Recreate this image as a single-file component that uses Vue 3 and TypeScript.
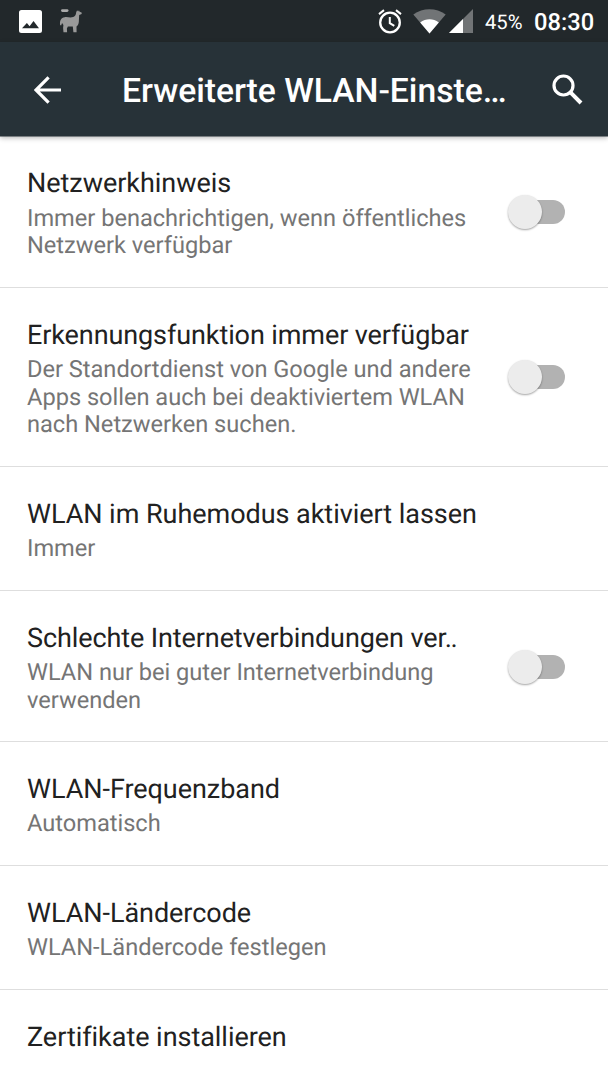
<script setup lang="ts">
interface Setting {
  title: string
  summary: string[]
  toggle?: boolean
  compact?: boolean
}

const settings: Setting[] = [
  { title: 'Netzwerkhinweis', summary: ['Immer benachrichtigen, wenn öffentliches', 'Netzwerk verfügbar'], toggle: true },
  {
    title: 'Erkennungsfunktion immer verfügbar',
    summary: ['Der Standortdienst von Google und andere', 'Apps sollen auch bei deaktiviertem WLAN', 'nach Netzwerken suchen.'],
    toggle: true,
    compact: true,
  },
  { title: 'WLAN im Ruhemodus aktiviert lassen', summary: ['Immer'] },
  { title: 'Schlechte Internetverbindungen ver‥', summary: ['WLAN nur bei guter Internetverbindung', 'verwenden'], toggle: true, compact: true },
  { title: 'WLAN-Frequenzband', summary: ['Automatisch'] },
  { title: 'WLAN-Ländercode', summary: ['WLAN-Ländercode festlegen'] },
  { title: 'Zertifikate installieren', summary: [] },
]
</script>

<template>
  <div class="screen">
    <div class="status">
      <svg class="photo" width="23" height="23" viewBox="0 0 23 23">
        <path fill="#fff" fill-rule="evenodd" d="M2.5 0h18A2.5 2.5 0 0 1 23 2.500v18a2.500 2.500 0 0 1-2.500 2.500h-18A2.500 2.500 0 0 1 0 20.500v-18A2.500 2.500 0 0 1 2.500 0zM3 18.200h17l-5.500-7.100-3.900 5.200-2.700-3.300z" />
      </svg>
      <svg class="llama" width="24" height="26" viewBox="0 0 24 26">
        <rect x="2" y="1.200" width="7.500" height="2.800" rx="1.400" fill="#aaa" />
        <path fill="#999" d="M17.200 4.200l.9-2 1 1.300.9-1.200.6 1.500 2 .8.1 1.500-2.500 1-.4 6.800c-.2 2.200-1.100 3.500-2.300 4.500l.1 5.800h-3.200l-.6-5.600H8.900l-1 2 .2 3.600H4.500l-.4-4.300.3-3-1.300-2-1 2.600-1-.4c-.5-4.600.8-7.400 4.600-7.900 3.200-.4 5.500.9 8.500-.2 2.200-.8 2.700-2.400 3-4.800z" />
      </svg>
      <div class="spacer"></div>
      <svg class="alarm" width="24" height="25" viewBox="0 0 24 25">
        <circle cx="12" cy="13.500" r="9.800" fill="none" stroke="#fff" stroke-width="2.300" />
        <path d="M11.800 8v6.200l4.500 2.700M1 5.100l5-4M23 5.100l-5-4" fill="none" stroke="#fff" stroke-width="2" />
      </svg>
      <svg class="wifi" width="33" height="25" viewBox="0 0 33 25">
        <path fill="#717476" d="M.3 5.500C9.800-1.400 23.200-1.400 32.700 5.500L16.500 24.500z" />
        <path fill="#fff" d="M7.200 13.400c5.600-4.300 13-4.300 18.600 0l-9.300 11.100z" />
      </svg>
      <svg class="cell" width="24" height="24" viewBox="0 0 24 24">
        <path fill="#717476" d="M0 24L24 0v24z" />
        <path fill="#fff" d="M0 24l14-14v14z" />
      </svg>
      <span class="battery">45%</span>
      <span class="clock">08:30</span>
    </div>

    <header class="bar">
      <svg class="back" width="28" height="28" viewBox="0 0 28 28">
        <path d="M27 14H3M14.600 1.400L2 14l12.600 12.600" fill="none" stroke="#fff" stroke-width="3.200" />
      </svg>
      <h1>Erweiterte WLAN-Einste…</h1>
      <svg class="search" width="31" height="31" viewBox="0 0 31 31">
        <circle cx="11.500" cy="11.500" r="9.500" fill="none" stroke="#fff" stroke-width="3.200" />
        <path d="M18.200 18.200l10.800 10.800" stroke="#fff" stroke-width="4" />
      </svg>
    </header>

    <main>
      <section v-for="item in settings" :key="item.title" class="row">
        <div class="copy">
          <h2 :class="{ compact: item.compact }">{{ item.title }}</h2>
          <p v-for="line in item.summary" :key="line">{{ line }}</p>
        </div>
        <div v-if="item.toggle" class="switch"><span class="thumb"></span></div>
      </section>
    </main>
  </div>
</template>

<style>
body {
  margin: 0;
  overflow: hidden;
}
</style>

<style scoped>
.screen {
  width: 608px;
  height: 1080px;
  overflow: hidden;
  display: flex;
  flex-direction: column;
  background: #fff;
  font-family: Roboto, "Noto Sans", sans-serif;
  text-rendering: geometricPrecision;
}
.status {
  height: 42px;
  flex: none;
  display: flex;
  align-items: center;
  background: #22282b;
  color: #fff;
  box-sizing: border-box;
  padding: 0 14px 0 19px;
}
svg {
  display: block;
  flex: none;
}
.llama {
  margin-left: 17px;
}
.spacer {
  flex: 1;
}
.wifi {
  margin-left: 11px;
}
.cell {
  margin-left: 3px;
}
.battery {
  width: 37px;
  margin-left: 12px;
  font-size: 20.200px;
  line-height: 42px;
  padding-top: 2px;
  white-space: nowrap;
}
.clock {
  width: 60px;
  margin-left: 12px;
  font-size: 23.700px;
  font-weight: 500;
  line-height: 42px;
  padding-top: 2px;
  white-space: nowrap;
}
.bar {
  height: 94px;
  flex: none;
  display: flex;
  align-items: center;
  box-sizing: border-box;
  padding: 1px 25px 0 34px;
  background: #273238;
  color: #fff;
  position: relative;
  box-shadow: 0 1px 0 rgba(39, 50, 56, 0.5), 0 2px 5px rgba(0, 0, 0, 0.28);
}
h1 {
  flex: 1;
  margin: 5px 0 0 60px;
  font-size: 33.700px;
  font-weight: 500;
  line-height: 40px;
  letter-spacing: -0.03px;
  white-space: nowrap;
}
.search {
  margin-bottom: 1px;
}
main {
  flex: none;
  padding-top: 0.4px;
}
.row {
  display: flex;
  align-items: center;
  justify-content: space-between;
  box-sizing: border-box;
  padding: 31px 43px 26.850px 27px;
  border-bottom: 1px solid #dedede;
}
h2 {
  margin: 0 0 5.200px;
  font-size: 27px;
  font-weight: 400;
  line-height: 32px;
  letter-spacing: -0.04px;
  color: #212121;
  white-space: nowrap;
}
h2.compact {
  letter-spacing: -0.1px;
}
p {
  margin: 0;
  font-size: 23.640px;
  line-height: 27.700px;
  letter-spacing: -0.02px;
  color: #757575;
  white-space: nowrap;
}
.switch {
  flex: none;
  width: 50px;
  height: 24px;
  margin-bottom: 3px;
  border-radius: 12px;
  background: #b2b2b2;
  display: flex;
  align-items: center;
}
.thumb {
  width: 34px;
  height: 34px;
  flex: none;
  margin-left: -7px;
  border-radius: 50%;
  background: #ececec;
  box-shadow: 0 1px 2px rgba(0, 0, 0, 0.36);
}
</style>
